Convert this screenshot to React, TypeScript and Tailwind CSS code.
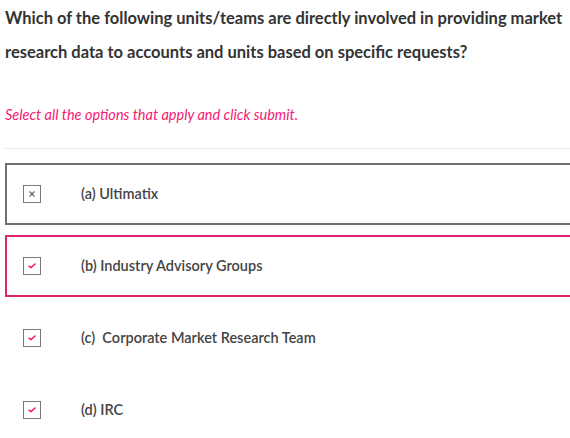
import React from "react";

const Check = () => (
  <svg width="8" height="6" viewBox="0 0 8 6">
    <path d="M1 3.2 L3 4.6 L7 1" fill="none" stroke="#f0227a" strokeWidth="1.6" strokeLinecap="round" strokeLinejoin="round" />
  </svg>
);

const Cross = () => (
  <svg width="8" height="8" viewBox="0 0 8 8">
    <path d="M1.5 1.5 L6.5 6.5 M6.5 1.5 L1.5 6.5" fill="none" stroke="#5f6868" strokeWidth="1.1" />
  </svg>
);

type Opt = { label: string; mark: "x" | "check"; border: string };

const options: Opt[] = [
  { label: "(a) Ultimatix", mark: "x", border: "border-[#707070]" },
  { label: "(b) Industry Advisory Groups", mark: "check", border: "border-[#e0246e]" },
  { label: "(c)\u00a0 Corporate Market Research Team", mark: "check", border: "border-transparent" },
  { label: "(d) IRC", mark: "check", border: "border-transparent" },
];

export default function App() {
  return (
    <div className="w-[570px] h-[438px] overflow-hidden bg-white pl-[5px]" style={{ fontFamily: "Lato, 'Open Sans', sans-serif" }}>
      <div className="pt-[1px] text-[16.5px] font-bold text-[#333333] leading-[34px] whitespace-nowrap">
        <div>Which of the following units/teams are directly involved in providing market</div>
        <div>research data to accounts and units based on specific requests?</div>
      </div>
      <div className="mt-[36px] text-[14.5px] italic text-[#f41a72] leading-[20px] whitespace-nowrap">
        Select all the options that apply and click submit.
      </div>
      <div className="mt-[23px] h-px bg-[#e6e6e6] mr-[-10px]" />
      <div className="mt-[14px] flex flex-col gap-[10px] mr-[-20px]">
        {options.map((o) => (
          <div key={o.label} className={`h-[62px] border-2 ${o.border} flex items-center`}>
            <div className="ml-[16px] w-[18px] h-[18px] border border-[#7a7a7a] flex items-center justify-center">
              {o.mark === "x" ? <Cross /> : <Check />}
            </div>
            <div className="ml-[40px] text-[14.5px] font-semibold text-[#444444] whitespace-pre">{o.label}</div>
          </div>
        ))}
      </div>
    </div>
  );
}
